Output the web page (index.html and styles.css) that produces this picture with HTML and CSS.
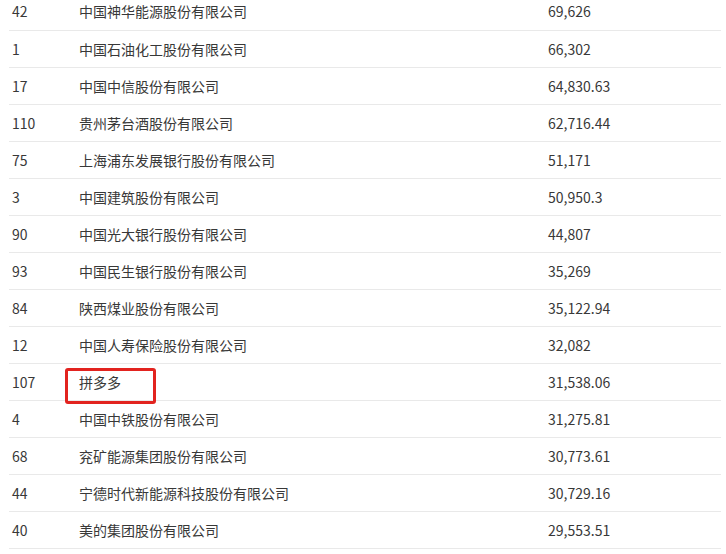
FILE: index.html
```html
<!DOCTYPE html>
<html lang="zh-CN">
<head>
  <meta charset="UTF-8">
  <title>市值排行</title>
  <link rel="stylesheet" href="styles.css">
</head>
<body>
  <table class="rank-table">
    <colgroup>
      <col class="col-rank">
      <col class="col-name">
      <col class="col-value">
    </colgroup>
    <tbody>
      <tr><td>42</td><td>中国神华能源股份有限公司</td><td>69,626</td></tr>
      <tr><td>1</td><td>中国石油化工股份有限公司</td><td>66,302</td></tr>
      <tr><td>17</td><td>中国中信股份有限公司</td><td>64,830.63</td></tr>
      <tr><td>110</td><td>贵州茅台酒股份有限公司</td><td>62,716.44</td></tr>
      <tr><td>75</td><td>上海浦东发展银行股份有限公司</td><td>51,171</td></tr>
      <tr><td>3</td><td>中国建筑股份有限公司</td><td>50,950.3</td></tr>
      <tr><td>90</td><td>中国光大银行股份有限公司</td><td>44,807</td></tr>
      <tr><td>93</td><td>中国民生银行股份有限公司</td><td>35,269</td></tr>
      <tr><td>84</td><td>陕西煤业股份有限公司</td><td>35,122.94</td></tr>
      <tr><td>12</td><td>中国人寿保险股份有限公司</td><td>32,082</td></tr>
      <tr><td>107</td><td class="marked">拼多多<span class="highlight"></span></td><td>31,538.06</td></tr>
      <tr><td>4</td><td>中国中铁股份有限公司</td><td>31,275.81</td></tr>
      <tr><td>68</td><td>兖矿能源集团股份有限公司</td><td>30,773.61</td></tr>
      <tr><td>44</td><td>宁德时代新能源科技股份有限公司</td><td>30,729.16</td></tr>
      <tr><td>40</td><td>美的集团股份有限公司</td><td>29,553.51</td></tr>
    </tbody>
  </table>
</body>
</html>
```

FILE: styles.css
```css
* {
  margin: 0;
  padding: 0;
  box-sizing: border-box;
}

body {
  font-family: "Noto Sans CJK SC", "Noto Sans", sans-serif;
  font-size: 14px;
  color: #383838;
  background: #fff;
  overflow: hidden;
}

.rank-table {
  width: 712px;
  margin: -7px 0 0 9px;
  border-collapse: collapse;
  table-layout: fixed;
}

.col-rank {
  width: 67px;
}

.col-name {
  width: 469px;
}

.rank-table td {
  height: 37px;
  padding: 0 3px;
  border-bottom: 1px solid #e9e9e9;
  vertical-align: middle;
  white-space: nowrap;
  line-height: 20px;
}

.marked {
  position: relative;
}

/* red frame drawn over the name cell */
.highlight {
  position: absolute;
  left: -11px;
  top: 4px;
  width: 91px;
  height: 36px;
  border: 3px solid #e2231f;
  border-radius: 3px;
}
```
